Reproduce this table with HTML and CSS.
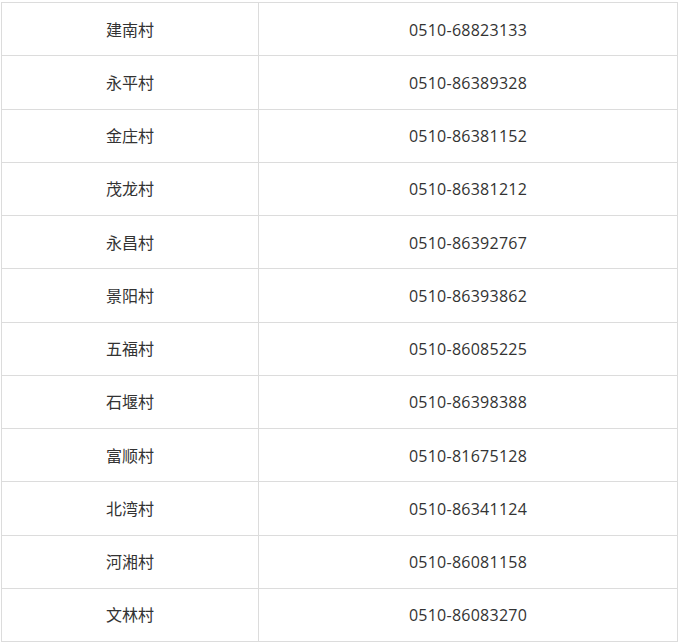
FILE: index.html
```html
<!DOCTYPE html>
<html lang="zh">
<head>
<meta charset="utf-8">
<link rel="stylesheet" href="styles.css">
</head>
<body>
<table class="tbl">
<tbody>
<tr><td class="name">建南村</td><td class="tel">0510-68823133</td></tr>
<tr><td class="name">永平村</td><td class="tel">0510-86389328</td></tr>
<tr><td class="name">金庄村</td><td class="tel">0510-86381152</td></tr>
<tr><td class="name">茂龙村</td><td class="tel">0510-86381212</td></tr>
<tr><td class="name">永昌村</td><td class="tel">0510-86392767</td></tr>
<tr><td class="name">景阳村</td><td class="tel">0510-86393862</td></tr>
<tr><td class="name">五福村</td><td class="tel">0510-86085225</td></tr>
<tr><td class="name">石堰村</td><td class="tel">0510-86398388</td></tr>
<tr><td class="name">富顺村</td><td class="tel">0510-81675128</td></tr>
<tr><td class="name">北湾村</td><td class="tel">0510-86341124</td></tr>
<tr><td class="name">河湘村</td><td class="tel">0510-86081158</td></tr>
<tr><td class="name">文林村</td><td class="tel">0510-86083270</td></tr>
</tbody>
</table>
</body>
</html>
```
FILE: styles.css
```css
html, body {
  margin: 0;
  padding: 0;
  background: #fff;
}
.tbl {
  margin: 2px 0 0 1px;
  width: 677px;
  border-collapse: collapse;
  table-layout: fixed;
  font-family: "Open Sans", "Noto Sans CJK SC", sans-serif;
  font-size: 16px;
  line-height: 20px;
  color: #333;
}
.tbl td {
  border: 1px solid #dcdcdc;
  height: 51.25px;
  padding: 1px 0 0;
  text-align: center;
  vertical-align: middle;
}
.tbl td.name {
  width: 256px;
}
.tbl td.tel {
  letter-spacing: 0.25px;
}
```
